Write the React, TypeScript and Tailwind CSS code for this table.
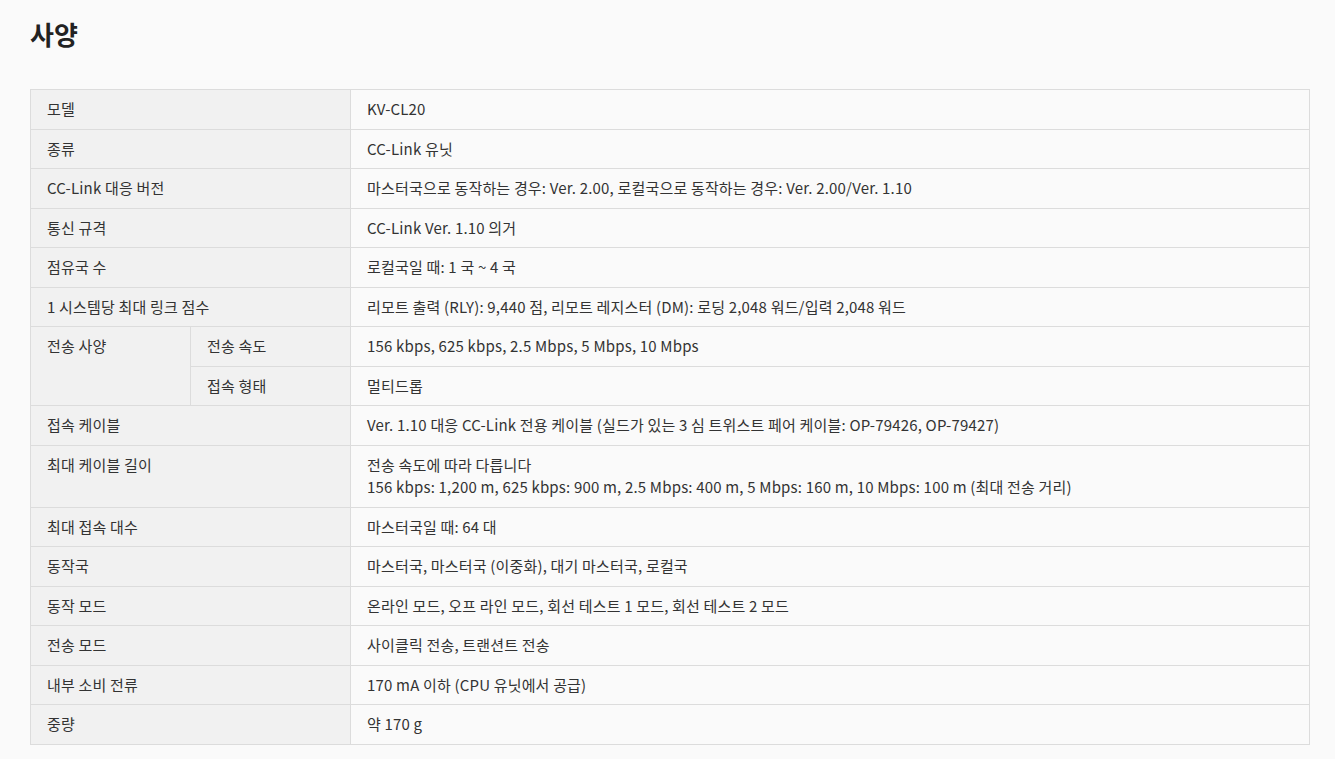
import React from "react";

type Row = { label: string; sub?: string; value: string[] };

const specs: Row[] = [
    { label: "모델", value: ["KV-CL20"] },
    { label: "종류", value: ["CC-Link 유닛"] },
    { label: "CC-Link 대응 버전", value: ["마스터국으로 동작하는 경우: Ver. 2.00, 로컬국으로 동작하는 경우: Ver. 2.00/Ver. 1.10"] },
    { label: "통신 규격", value: ["CC-Link Ver. 1.10 의거"] },
    { label: "점유국 수", value: ["로컬국일 때: 1 국 ~ 4 국"] },
    { label: "1 시스템당 최대 링크 점수", value: ["리모트 출력 (RLY): 9,440 점, 리모트 레지스터 (DM): 로딩 2,048 워드/입력 2,048 워드"] },
];

const specsAfter: Row[] = [
    { label: "접속 케이블", value: ["Ver. 1.10 대응 CC-Link 전용 케이블 (실드가 있는 3 심 트위스트 페어 케이블: OP-79426, OP-79427)"] },
    {
        label: "최대 케이블 길이",
        value: [
            "전송 속도에 따라 다릅니다",
            "156 kbps: 1,200 m, 625 kbps: 900 m, 2.5 Mbps: 400 m, 5 Mbps: 160 m, 10 Mbps: 100 m (최대 전송 거리)",
        ],
    },
    { label: "최대 접속 대수", value: ["마스터국일 때: 64 대"] },
    { label: "동작국", value: ["마스터국, 마스터국 (이중화), 대기 마스터국, 로컬국"] },
    { label: "동작 모드", value: ["온라인 모드, 오프 라인 모드, 회선 테스트 1 모드, 회선 테스트 2 모드"] },
    { label: "전송 모드", value: ["사이클릭 전송, 트랜션트 전송"] },
    { label: "내부 소비 전류", value: ["170 mA 이하 (CPU 유닛에서 공급)"] },
    { label: "중량", value: ["약 170 g"] },
];

const th = "border border-[#dcdcdc] bg-[#f1f1f1] px-4 py-2 text-left align-top font-normal";
const td = "border border-[#dcdcdc] bg-[#fafafa] px-4 py-2 text-left align-top";

function SpecRow({ row }: { row: Row }) {
    return (
        <tr>
            <th colSpan={2} className={th}>{row.label}</th>
            <td className={td}>
                {row.value.map((line, i) => (
                    <div key={i}>{line}</div>
                ))}
            </td>
        </tr>
    );
}

export default function App() {
    return (
        <div
            className="min-h-screen bg-[#fafafa] pl-[30px] pr-[25px] pt-[15px] pb-[14px] text-[#333333]"
            style={{ fontFamily: '"Noto Sans CJK KR", "Noto Sans", sans-serif' }}
        >
            <h2 className="text-[26px] font-bold leading-[38px] text-[#222222]">사양</h2>
            <table className="mt-[36px] w-full border-collapse table-fixed text-[15px] leading-[22.5px] tracking-[0.18px]">
                <colgroup>
                    <col className="w-[160px]" />
                    <col className="w-[160px]" />
                    <col />
                </colgroup>
                <tbody>
                    {specs.map((r) => (
                        <SpecRow key={r.label} row={r} />
                    ))}
                    <tr>
                        <th rowSpan={2} className={th}>전송 사양</th>
                        <th className={th}>전송 속도</th>
                        <td className={td}>156 kbps, 625 kbps, 2.5 Mbps, 5 Mbps, 10 Mbps</td>
                    </tr>
                    <tr>
                        <th className={th}>접속 형태</th>
                        <td className={td}>멀티드롭</td>
                    </tr>
                    {specsAfter.map((r) => (
                        <SpecRow key={r.label} row={r} />
                    ))}
                </tbody>
            </table>
        </div>
    );
}
